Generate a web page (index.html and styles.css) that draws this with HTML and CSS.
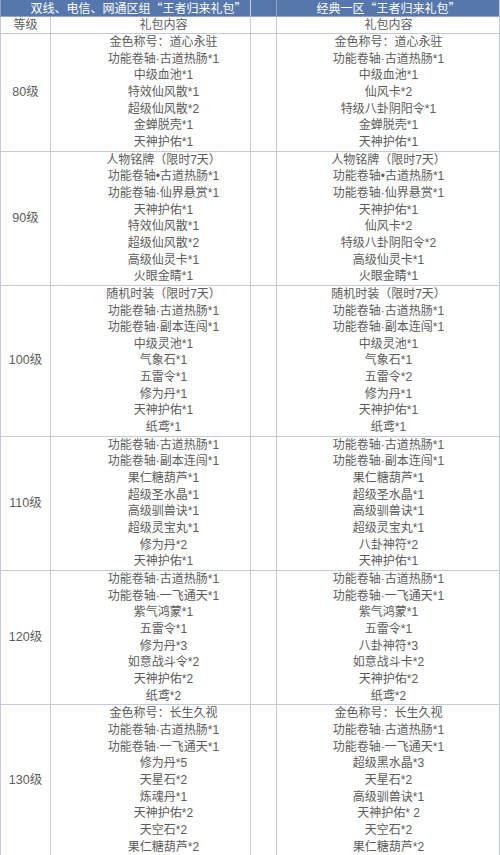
FILE: index.html
```html
<!DOCTYPE html>
<html lang="zh-CN">
<head>
<meta charset="utf-8">
<title>王者归来礼包</title>
<link rel="stylesheet" href="styles.css">
</head>
<body>
<div class="page">
  <div class="panel panel-left">
    <table class="gift left">
      <colgroup><col class="c-level"><col class="c-content-l"></colgroup>
      <tr class="head"><th colspan="2">双线、电信、网通区组“王者归来礼包”</th></tr>
      <tr class="sub"><td>等级</td><td>礼包内容</td></tr>
      <tr><td class="lv">80级</td><td>金色称号：道心永驻<br>功能卷轴·古道热肠*1<br>中级血池*1<br>特效仙风散*1<br>超级仙风散*2<br>金蝉脱壳*1<br>天神护佑*1</td></tr>
      <tr><td class="lv">90级</td><td>人物铭牌（限时7天）<br>功能卷轴•古道热肠*1<br>功能卷轴·仙界悬赏*1<br>天神护佑*1<br>特效仙风散*1<br>超级仙风散*2<br>高级仙灵卡*1<br>火眼金睛*1</td></tr>
      <tr><td class="lv">100级</td><td>随机时装（限时7天）<br>功能卷轴·古道热肠*1<br>功能卷轴·副本连闯*1<br>中级灵池*1<br>气象石*1<br>五雷令*1<br>修为丹*1<br>天神护佑*1<br>纸鸢*1</td></tr>
      <tr><td class="lv">110级</td><td>功能卷轴·古道热肠*1<br>功能卷轴·副本连闯*1<br>果仁糖葫芦*1<br>超级圣水晶*1<br>高级驯兽诀*1<br>超级灵宝丸*1<br>修为丹*2<br>天神护佑*1</td></tr>
      <tr><td class="lv">120级</td><td>功能卷轴·古道热肠*1<br>功能卷轴·一飞通天*1<br>紫气鸿蒙*1<br>五雷令*1<br>修为丹*3<br>如意战斗令*2<br>天神护佑*2<br>纸鸢*2</td></tr>
      <tr><td class="lv">130级</td><td>金色称号：长生久视<br>功能卷轴·古道热肠*1<br>功能卷轴·一飞通天*1<br>修为丹*5<br>天星石*2<br>炼魂丹*1<br>天神护佑*2<br>天空石*2<br>果仁糖葫芦*2</td></tr>
    </table>
  </div>
  <div class="panel panel-right">
    <table class="gift right">
      <colgroup><col class="c-level"><col class="c-content-r"></colgroup>
      <tr class="head"><th></th><th>经典一区“王者归来礼包”</th></tr>
      <tr class="sub"><td></td><td>礼包内容</td></tr>
      <tr><td class="lv"></td><td>金色称号：道心永驻<br>功能卷轴·古道热肠*1<br>中级血池*1<br>仙风卡*2<br>特级八卦阴阳令*1<br>金蝉脱壳*1<br>天神护佑*1</td></tr>
      <tr><td class="lv"></td><td>人物铭牌（限时7天）<br>功能卷轴•古道热肠*1<br>功能卷轴·仙界悬赏*1<br>天神护佑*1<br>仙风卡*2<br>特级八卦阴阳令*2<br>高级仙灵卡*1<br>火眼金睛*1</td></tr>
      <tr><td class="lv"></td><td>随机时装（限时7天）<br>功能卷轴·古道热肠*1<br>功能卷轴·副本连闯*1<br>中级灵池*1<br>气象石*1<br>五雷令*2<br>修为丹*1<br>天神护佑*1<br>纸鸢*1</td></tr>
      <tr><td class="lv"></td><td>功能卷轴·古道热肠*1<br>功能卷轴·副本连闯*1<br>果仁糖葫芦*1<br>超级圣水晶*1<br>高级驯兽诀*1<br>超级灵宝丸*1<br>八卦神符*2<br>天神护佑*1</td></tr>
      <tr><td class="lv"></td><td>功能卷轴·古道热肠*1<br>功能卷轴·一飞通天*1<br>紫气鸿蒙*1<br>五雷令*1<br>八卦神符*3<br>如意战斗卡*2<br>天神护佑*2<br>纸鸢*2</td></tr>
      <tr><td class="lv"></td><td>金色称号：长生久视<br>功能卷轴·古道热肠*1<br>功能卷轴·一飞通天*1<br>超级黑水晶*3<br>天星石*2<br>高级驯兽诀*1<br>天神护佑* 2<br>天空石*2<br>果仁糖葫芦*2</td></tr>
    </table>
  </div>
</div>
</body>
</html>
```

FILE: styles.css
```css
html, body {
  margin: 0;
  padding: 0;
  background: #ffffff;
}
.page {
  width: 500px;
  height: 855px;
  display: flex;
  overflow: hidden;
  font-family: "Liberation Sans", "Noto Sans CJK SC", sans-serif;
  color: #5c5c5c;
}
.panel {
  width: 250px;
  flex: 0 0 250px;
  overflow: hidden;
}
.panel-right {
  border-left: 1px solid #c4cbd6;
  box-sizing: border-box;
  border-right: 1px solid #c4cbd6;
}
.gift {
  border-collapse: collapse;
  table-layout: fixed;
  font-size: 12px;
  line-height: 16.65px;
}
.gift.left { width: 276px; }
.gift.right { width: 274px; margin-left: -25px; }
.c-level { width: 50px; }
.c-content-l { width: 226px; }
.c-content-r { width: 224px; }
.gift td, .gift th {
  padding: 0;
  text-align: center;
  vertical-align: middle;
  border: 1px solid #c4cbd6;
  white-space: nowrap;
}
.gift td { overflow: hidden; }
.gift tr:first-child th { border-top: none; }
.head th {
  background: #5677ab;
  color: #ffffff;
  font-family: "Noto Sans CJK SC", sans-serif;
  font-weight: normal;
  font-size: 12px;
  height: 16px;
  line-height: 16px;
  border-color: #8ea5c8;
}
.sub td {
  height: 16px;
  line-height: 16px;
}
.lv {
  font-size: 12.5px;
}
```
